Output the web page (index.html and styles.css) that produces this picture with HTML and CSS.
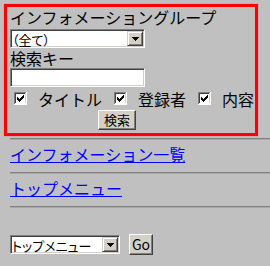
FILE: index.html
```html
<!DOCTYPE html>
<html lang="ja">
<head>
    <meta charset="UTF-8">
    <meta name="viewport" content="width=device-width, initial-scale=1.0">
    <title>インフォメーション検索</title>
    <link rel="stylesheet" href="styles.css">
</head>
<body>

<form class="search-box">
    <div class="label first">インフォメーショングループ</div>
    <div class="select-wrap group-select">
        <select>
            <option>（全て）</option>
        </select>
        <span class="arrow-btn"><svg width="7" height="4" viewBox="0 0 7 4"><path d="M0 0h7v1h-1v1h-1v1h-1v1h-1v-1h-1v-1h-1v-1h-1z" fill="#000"/></svg></span>
    </div>
    <div class="label">検索キー</div>
    <input type="text" class="text-input">
    <div class="checks">
        <label class="check">
            <svg class="box" width="13" height="13" viewBox="0 0 13 13" shape-rendering="crispEdges">
                <rect x="0" y="0" width="13" height="13" fill="#fff"/>
                <path d="M0 0h12v1h-11v11h-1z" fill="#808080"/>
                <path d="M1 1h10v1h-9v9h-1z" fill="#404040"/>
                <path d="M1 11h11v-10h-1v10h-10z" fill="#d4d0c8"/>
                <path d="M3 5h1v3h-1zM4 6h1v3h-1zM5 7h1v3h-1zM6 6h1v3h-1zM7 5h1v3h-1zM8 4h1v3h-1zM9 3h1v3h-1z" fill="#000"/>
            </svg>
            タイトル
        </label>
        <label class="check">
            <svg class="box" width="13" height="13" viewBox="0 0 13 13" shape-rendering="crispEdges">
                <rect x="0" y="0" width="13" height="13" fill="#fff"/>
                <path d="M0 0h12v1h-11v11h-1z" fill="#808080"/>
                <path d="M1 1h10v1h-9v9h-1z" fill="#404040"/>
                <path d="M1 11h11v-10h-1v10h-10z" fill="#d4d0c8"/>
                <path d="M3 5h1v3h-1zM4 6h1v3h-1zM5 7h1v3h-1zM6 6h1v3h-1zM7 5h1v3h-1zM8 4h1v3h-1zM9 3h1v3h-1z" fill="#000"/>
            </svg>
            登録者
        </label>
        <label class="check">
            <svg class="box" width="13" height="13" viewBox="0 0 13 13" shape-rendering="crispEdges">
                <rect x="0" y="0" width="13" height="13" fill="#fff"/>
                <path d="M0 0h12v1h-11v11h-1z" fill="#808080"/>
                <path d="M1 1h10v1h-9v9h-1z" fill="#404040"/>
                <path d="M1 11h11v-10h-1v10h-10z" fill="#d4d0c8"/>
                <path d="M3 5h1v3h-1zM4 6h1v3h-1zM5 7h1v3h-1zM6 6h1v3h-1zM7 5h1v3h-1zM8 4h1v3h-1zM9 3h1v3h-1z" fill="#000"/>
            </svg>
            内容
        </label>
    </div>
    <button type="button" class="btn search-btn">検索</button>
</form>

<hr>
<div class="nav-item"><a href="#">インフォメーション一覧</a></div>
<hr>
<div class="nav-item"><a href="#">トップメニュー</a></div>
<hr>

<form class="jump">
    <div class="select-wrap jump-select">
        <select>
            <option>トップメニュー</option>
        </select>
        <span class="arrow-btn"><svg width="7" height="4" viewBox="0 0 7 4"><path d="M0 0h7v1h-1v1h-1v1h-1v1h-1v-1h-1v-1h-1v-1h-1z" fill="#000"/></svg></span>
    </div>
    <button type="button" class="btn go-btn">Go</button>
</form>

</body>
</html>
```

FILE: styles.css
```css
body {
    margin: 0;
    background-color: #c0c0c0;
    color: #000;
    font-family: "Noto Sans CJK JP", "Noto Sans", sans-serif;
    font-size: 16px;
}
.search-box {
    width: 254px;
    box-sizing: border-box;
    margin: 4px 0 0 4px;
    border: 3px solid #f00;
    box-shadow: 0 0 1px rgba(255, 0, 0, 0.6);
    padding: 0 3px 3px 3px;
}
.label {
    line-height: 20px;
    height: 20px;
    white-space: nowrap;
}
.label.first {
    height: 22px;
}
.select-wrap {
    position: relative;
    height: 19px;
}
.select-wrap select {
    appearance: none;
    -webkit-appearance: none;
    display: block;
    width: 100%;
    height: 19px;
    margin: 0;
    padding: 0 18px 0 1px;
    background: #fff;
    border: 1px solid;
    border-color: #808080 #fff #fff #808080;
    box-shadow: inset 1px 1px #404040, inset -1px -1px #d4d0c8;
    border-radius: 0;
    font-family: "Noto Sans CJK JP", sans-serif;
    font-size: 13px;
    font-feature-settings: "palt";
    color: #000;
    outline: none;
}
.arrow-btn {
    position: absolute;
    top: 2px;
    right: 2px;
    width: 16px;
    height: 15px;
    box-sizing: border-box;
    display: flex;
    align-items: center;
    justify-content: center;
    background: #d4d0c8;
    border: 1px solid;
    border-color: #d4d0c8 #404040 #404040 #d4d0c8;
    box-shadow: inset 1px 1px #fff, inset -1px -1px #808080;
    pointer-events: none;
}
.arrow-btn svg {
    display: block;
}
.group-select {
    width: 135px;
}
.text-input {
    display: block;
    width: 135px;
    height: 19px;
    box-sizing: border-box;
    margin: 0;
    padding: 0 2px;
    background: #fff;
    border: 1px solid;
    border-color: #808080 #fff #fff #808080;
    box-shadow: inset 1px 1px #404040, inset -1px -1px #d4d0c8;
    outline: none;
}
.checks {
    display: flex;
    align-items: center;
    height: 23px;
    padding-left: 4px;
    white-space: nowrap;
}
.check {
    display: flex;
    align-items: center;
    margin-right: 12px;
    line-height: 20px;
}
.check .box {
    display: block;
    margin-right: 11px;
}
.btn {
    display: block;
    box-sizing: border-box;
    margin: 0;
    padding: 0;
    background: #d4d0c8;
    border: 1px solid;
    border-color: #fff #404040 #404040 #fff;
    box-shadow: inset -1px -1px #808080;
    border-radius: 0;
    font-family: "Noto Sans CJK JP", sans-serif;
    color: #000;
    cursor: pointer;
}
.search-btn {
    margin-left: 88px;
    width: 38px;
    height: 20px;
    font-size: 13px;
    line-height: 16px;
}
hr {
    display: block;
    height: 1px;
    margin: 2px 0 0 10px;
    border: none;
    border-top: 1px solid #808080;
    background: #a8a8a8;
}
.nav-item {
    padding: 4px 0 8px 10px;
    line-height: 20px;
}
.nav-item a {
    color: #00f;
    text-decoration: underline;
}
.nav-item + hr {
    margin-top: 0;
}
.jump {
    display: flex;
    align-items: center;
    margin: 26px 0 0 10px;
}
.jump-select {
    width: 110px;
}
.go-btn {
    margin-left: 9px;
    width: 24px;
    height: 21px;
    font-size: 14px;
    line-height: 17px;
}
```
